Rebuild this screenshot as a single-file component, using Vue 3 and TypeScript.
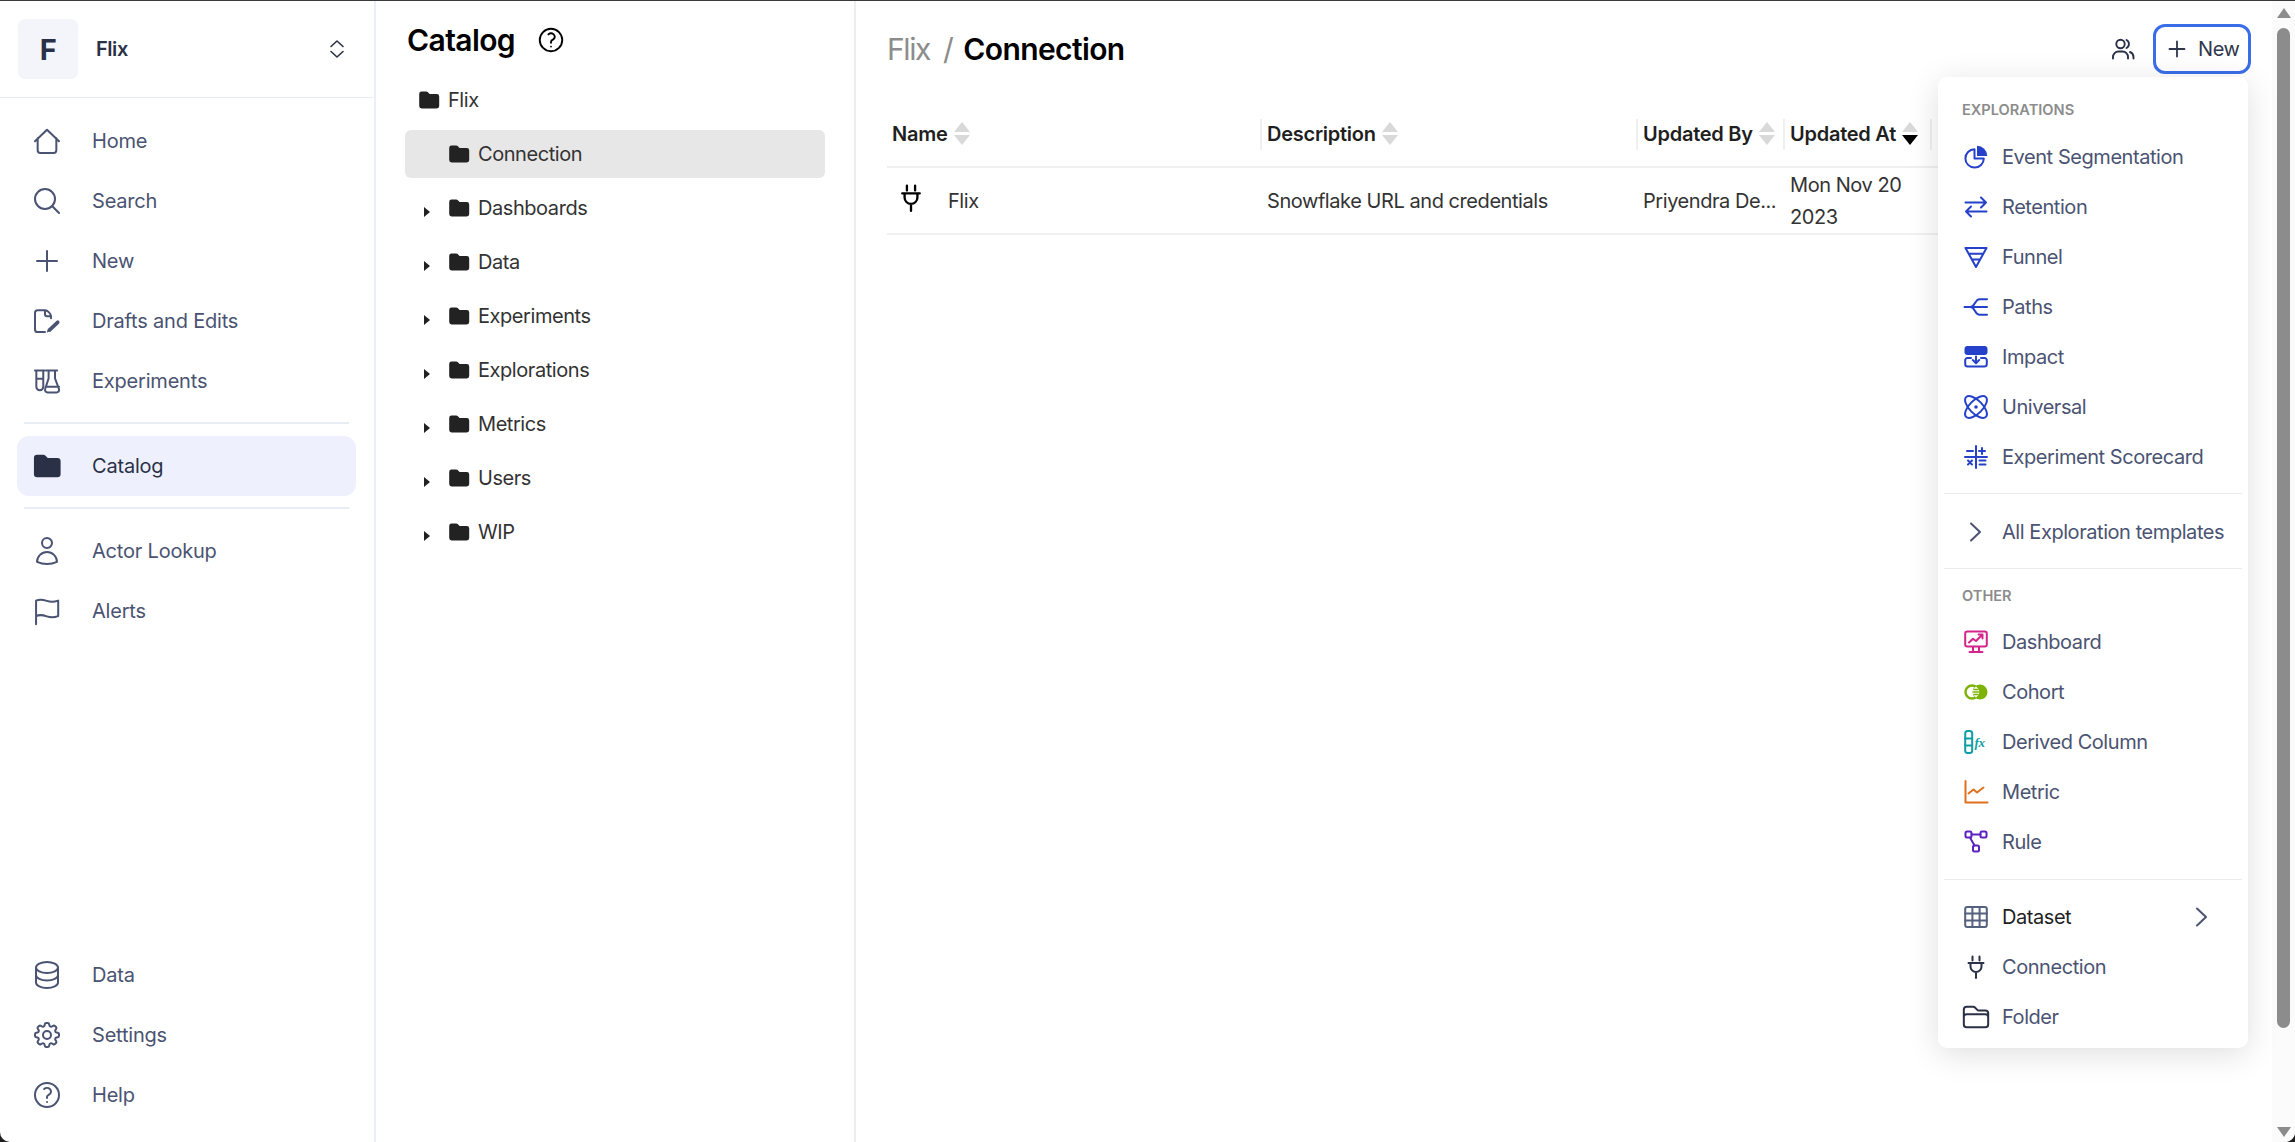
<script setup lang="ts">
interface NavItem { label: string; icon: string }
interface MenuItem { label: string; icon: string; color: string; large?: boolean; dark?: boolean; more?: boolean }

const BLUE = '#2541c9'
const SLATE = '#2a3147'

// inner svg markup, all on a 24 box
const icons: Record<string, string> = {
  home: '<path d="M3 12.2 12 3.6l9 8.6M5 10v9a2 2 0 0 0 2 2h10a2 2 0 0 0 2-2v-9"/>',
  search: '<path d="M21 21l-5.197-5.197m0 0A7.5 7.5 0 105.196 5.196a7.5 7.5 0 0010.607 10.607z"/>',
  plus: '<path d="M12 4.5v15m7.5-7.5h-15"/>',
  drafts: '<path d="M10.500 20.300H5a2 2 0 0 1-2-2V6a2 2 0 0 1 2-2h5.500c.5 0 2 .5 3 1.500s1.500 2 1.500 3v1.500M10.500 4v3a1.500 1.500 0 0 0 1.500 1.500h3"/><path d="M14 18.600l6-5.600" stroke-width="2.800"/><path d="M11.800 20.600l1-3 2 2z" fill="currentColor" stroke="none"/>',
  experiments: '<path d="M3 4.2h7.4M4 4.2v12.2a2.6 2.6 0 0 0 5.2 0V4.2M4 10.4h5.2M11.6 4.2h8M13.2 4.2V10l-2.6 8a2 2 0 0 0 1.9 2.6h6.6a2 2 0 0 0 1.9-2.6L18 10V4.2M11 16.4h10"/>',
  user: '<path d="M15.75 6a3.75 3.75 0 11-7.5 0 3.75 3.75 0 017.5 0zM4.501 20.118a7.5 7.5 0 0114.998 0A17.933 17.933 0 0112 21.75c-2.676 0-5.216-.584-7.499-1.632z"/>',
  flag: '<path d="M3.8 22V4.2c3-1.4 5.2-.8 8 .2 3 1 5.4 1 8.6-.2v11.6c-3.2 1.2-5.600 1.2-8.6.2-2.8-1-5-1.6-8-.2"/>',
  data: '<path d="M20.25 6.375c0 2.278-3.694 4.125-8.25 4.125S3.75 8.653 3.75 6.375m16.5 0c0-2.278-3.694-4.125-8.25-4.125S3.75 4.097 3.75 6.375m16.5 0v11.25c0 2.278-3.694 4.125-8.25 4.125s-8.25-1.847-8.25-4.125V6.375m16.5 5.625c0 2.278-3.694 4.125-8.25 4.125S3.75 14.278 3.75 12"/>',
  settings: '<path d="M10.343 3.94c.09-.542.56-.94 1.11-.94h1.093c.55 0 1.02.398 1.11.94l.149.894c.07.424.384.764.78.93.398.164.855.142 1.205-.108l.737-.527a1.125 1.125 0 011.45.12l.773.774c.39.389.44 1.002.12 1.45l-.527.737c-.25.35-.272.806-.107 1.204.165.397.505.71.93.78l.893.15c.543.09.94.56.94 1.109v1.094c0 .55-.397 1.02-.94 1.11l-.893.149c-.425.07-.765.383-.93.78-.165.398-.143.854.107 1.204l.527.738c.32.447.269 1.06-.12 1.45l-.774.773a1.125 1.125 0 01-1.449.12l-.738-.527c-.35-.25-.806-.272-1.203-.107-.397.165-.71.505-.781.929l-.149.894c-.09.542-.56.94-1.11.94h-1.094c-.55 0-1.019-.398-1.11-.94l-.148-.894c-.071-.424-.384-.764-.781-.93-.398-.164-.854-.142-1.204.108l-.738.527c-.447.32-1.06.269-1.45-.12l-.773-.774a1.125 1.125 0 01-.12-1.45l.527-.737c.25-.35.273-.806.108-1.204-.165-.397-.505-.71-.93-.78l-.894-.15c-.542-.09-.94-.56-.94-1.109v-1.094c0-.55.398-1.02.94-1.11l.894-.149c.424-.07.765-.383.93-.78.165-.398.143-.854-.107-1.204l-.527-.738a1.125 1.125 0 01.12-1.45l.773-.773a1.125 1.125 0 011.45-.12l.737.527c.35.25.807.272 1.204.107.397-.165.71-.505.78-.929l.15-.894z"/><path d="M15 12a3 3 0 11-6 0 3 3 0 016 0z"/>',
  help: '<path d="M9.879 7.519c1.171-1.025 3.071-1.025 4.242 0 1.172 1.025 1.172 2.687 0 3.712-.203.179-.43.326-.67.442-.745.361-1.45.999-1.45 1.827v.75M21 12a9 9 0 11-18 0 9 9 0 0118 0zm-9 5.25h.008v.008H12v-.008z"/>',
  folderSolid: '<path fill="currentColor" stroke="none" d="M2.2 6A2.4 2.4 0 0 1 4.6 3.6h4.6c.6 0 1.2.3 1.7.7l1.7 1.7h7.2a2.4 2.4 0 0 1 2.4 2.4v9.6a2.4 2.4 0 0 1-2.4 2.4H4.6a2.4 2.4 0 0 1-2.4-2.4z"/>',
  plug: '<path d="M8.5 1.5v4M15.5 1.5v4M4.5 8h15M6.5 8v3.5a5.5 5.5 0 0 0 11 0V8M12 17v6"/>',
  pie: '<path d="M10.5 4.2A9.2 9.2 0 1 0 19.8 13.5H10.5z"/><path fill="currentColor" stroke="none" d="M13 .8A10.2 10.2 0 0 1 23.2 11H13z"/>',
  retention: '<path d="M1.5 7.5H22M17 2.5l5 5-5 5M22.5 16.5H2M7 11.5l-5 5 5 5"/>',
  funnel: '<path d="M1.5 3h21L12 22zM5 8.8h14M8.4 14.4h7.2"/>',
  paths: '<path d="M.5 12H23M6.500 12c4.500 0 4.500-7.800 9-7.800H23M6.500 12c4.500 0 4.500 7.800 9 7.800H23"/>',
  impact: '<rect x=".5" y="1" width="23" height="9" rx="3" fill="currentColor" stroke="none"/><path d="M7 13H3.4a2.2 2.2 0 0 0-2.2 2.2V19a2.6 2.6 0 0 0 2.6 2.6h16.4a2.6 2.6 0 0 0 2.6-2.6v-3.8a2.2 2.2 0 0 0-2.2-2.2H17M12 11.5v6M8.8 15l3.2 3.2 3.2-3.2"/>',
  universal: '<ellipse cx="12" cy="12" rx="14" ry="6.5" transform="rotate(45 12 12)"/><ellipse cx="12" cy="12" rx="14" ry="6.5" transform="rotate(-45 12 12)"/><circle cx="12" cy="12" r="1.8" fill="currentColor" stroke="none"/>',
  scorecard: '<path d="M12 1v22M1 12h22M3 6h6M15 6h6M18 3v6M4 15.5l4 4M8 15.5l-4 4M15.500 15.500h6M15.500 19.500h6"/>',
  dashboard: '<rect x="1.200" y="1.500" width="21.600" height="15" rx="2"/><path d="M9 17v4M15 17v4M5.500 22h13M5 12.500l4-3.800 3 2.300 6-6M14.500 4.500h4v4"/>',
  cohort: '<circle cx="8" cy="12" r="6.500" stroke-width="2.400"/><circle cx="16" cy="12" r="7.500" fill="currentColor" stroke="none"/><path fill="#fff" stroke="none" d="M12 6.500c2.200 1.400 3.200 3.400 3.200 5.500s-1 4.100-3.200 5.500c-2.200-1.400-3.200-3.400-3.200-5.500s1-4.100 3.200-5.500z"/><path stroke-width="1.400" d="M10 9.500h4M9.600 12h4.800M10 14.500h4"/>',
  derived: '<rect x="1.200" y="1" width="7" height="22" rx="2.500"/><path d="M1.200 8.500h7M1.200 15.500h7"/><text x="10.500" y="16.500" font-family="Liberation Serif, serif" font-style="italic" font-weight="700" font-size="13" fill="currentColor" stroke="none">fx</text>',
  metric: '<path d="M1.500 1v21.500h22M4.500 13.500l5-4 3.500 3 6.500-5"/>',
  rule: '<rect x="1.500" y="1.500" width="6" height="6" rx="1.500"/><rect x="16.500" y="1.500" width="6" height="6" rx="1.500"/><rect x="9" y="15.500" width="6" height="6" rx="1.500"/><path d="M7.500 4.500h9M6 7.500l4.500 8"/>',
  table: '<rect x="1.200" y="2" width="21.600" height="20" rx="2"/><path d="M8.400 2v20M15.600 2v20M1.200 8.600h21.600M1.200 15.400h21.600"/>',
  folder: '<path d="M2.250 12.750V12A2.250 2.250 0 014.500 9.750h15A2.250 2.250 0 0121.750 12v.75m-8.690-6.440l-2.120-2.120a1.500 1.500 0 00-1.061-.44H4.500A2.250 2.250 0 002.250 6v12a2.250 2.250 0 002.250 2.250h15A2.250 2.250 0 0021.750 18V9a2.250 2.250 0 00-2.250-2.250h-5.379a1.500 1.500 0 01-1.060-.44z"/>',
  chevron: '<path d="M7 3.500 16 12l-9 8.500"/>',
}

const mainNav: NavItem[] = [
  { label: 'Home', icon: 'home' },
  { label: 'Search', icon: 'search' },
  { label: 'New', icon: 'plus' },
  { label: 'Drafts and Edits', icon: 'drafts' },
  { label: 'Experiments', icon: 'experiments' },
]
const lookupNav: NavItem[] = [
  { label: 'Actor Lookup', icon: 'user' },
  { label: 'Alerts', icon: 'flag' },
]
const bottomNav: NavItem[] = [
  { label: 'Data', icon: 'data' },
  { label: 'Settings', icon: 'settings' },
  { label: 'Help', icon: 'help' },
]

const folders = ['Dashboards', 'Data', 'Experiments', 'Explorations', 'Metrics', 'Users', 'WIP']

const explorations: MenuItem[] = [
  { label: 'Event Segmentation', icon: 'pie', color: BLUE },
  { label: 'Retention', icon: 'retention', color: BLUE },
  { label: 'Funnel', icon: 'funnel', color: BLUE },
  { label: 'Paths', icon: 'paths', color: BLUE },
  { label: 'Impact', icon: 'impact', color: BLUE },
  { label: 'Universal', icon: 'universal', color: BLUE },
  { label: 'Experiment Scorecard', icon: 'scorecard', color: BLUE },
]
const others: MenuItem[] = [
  { label: 'Dashboard', icon: 'dashboard', color: '#d4248c' },
  { label: 'Cohort', icon: 'cohort', color: '#7cb305' },
  { label: 'Derived Column', icon: 'derived', color: '#0f9ea6' },
  { label: 'Metric', icon: 'metric', color: '#e0701e' },
  { label: 'Rule', icon: 'rule', color: '#5a22c0' },
]
const extras: MenuItem[] = [
  { label: 'Dataset', icon: 'table', color: '#56607f', dark: true, more: true },
  { label: 'Connection', icon: 'plug', color: SLATE },
  { label: 'Folder', icon: 'folder', color: SLATE, large: true },
]
</script>

<template>
  <div class="window">
    <!-- Left nav -->
    <aside class="sidebar">
      <div class="org">
        <div class="org-badge">F</div>
        <span class="org-name">Flix</span>
        <svg class="org-switch" viewBox="0 0 24 24"><path d="M6 9.500l6-5.500 6 5.500M6 14.500l6 5.500 6-5.500"/></svg>
      </div>

      <nav class="nav nav-main">
        <a v-for="item in mainNav" :key="item.label" class="nav-item">
          <svg class="nav-icon" viewBox="0 0 24 24" v-html="icons[item.icon]"></svg>
          <span>{{ item.label }}</span>
        </a>
        <div class="nav-rule"></div>
        <a class="nav-item active">
          <svg class="nav-icon" viewBox="0 0 24 24" v-html="icons.folderSolid"></svg>
          <span>Catalog</span>
        </a>
        <div class="nav-rule"></div>
        <a v-for="item in lookupNav" :key="item.label" class="nav-item">
          <svg class="nav-icon" viewBox="0 0 24 24" v-html="icons[item.icon]"></svg>
          <span>{{ item.label }}</span>
        </a>
      </nav>

      <nav class="nav nav-bottom">
        <a v-for="item in bottomNav" :key="item.label" class="nav-item">
          <svg class="nav-icon" viewBox="0 0 24 24" v-html="icons[item.icon]"></svg>
          <span>{{ item.label }}</span>
        </a>
      </nav>
    </aside>

    <!-- Catalog tree -->
    <section class="catalog">
      <div class="catalog-head">
        <h1>Catalog</h1>
        <svg class="catalog-help" viewBox="0 0 24 24" v-html="icons.help"></svg>
      </div>
      <div class="tree">
        <div class="tree-row">
          <svg class="tree-folder" viewBox="0 0 24 24" v-html="icons.folderSolid"></svg>
          <span>Flix</span>
        </div>
        <div class="tree-row selected">
          <span class="caret-slot"></span>
          <svg class="tree-folder" viewBox="0 0 24 24" v-html="icons.folderSolid"></svg>
          <span>Connection</span>
        </div>
        <div v-for="name in folders" :key="name" class="tree-row">
          <span class="caret-slot"><i class="caret"></i></span>
          <svg class="tree-folder" viewBox="0 0 24 24" v-html="icons.folderSolid"></svg>
          <span>{{ name }}</span>
        </div>
      </div>
    </section>

    <!-- Content -->
    <main class="content">
      <header class="topbar">
        <div class="crumbs">
          <span class="crumb-root">Flix</span>
          <span class="crumb-sep">/</span>
          <span class="crumb-current">Connection</span>
        </div>
        <div class="actions">
          <svg class="people" viewBox="0 0 24 24">
            <circle cx="9.500" cy="7" r="4.200"/>
            <path d="M2 21.500V20a5.500 5.500 0 0 1 5.500-5.500h4A5.500 5.500 0 0 1 17 20v1.500M15.500 3a4.500 4.500 0 0 1 0 8M22.500 21.500V20a5.500 5.500 0 0 0-3.500-5"/>
          </svg>
          <button class="new-btn">
            <svg viewBox="0 0 24 24"><path d="M12 4.500v15m7.500-7.500h-15"/></svg>
            <span>New</span>
          </button>
        </div>
      </header>

      <div class="grid">
        <div class="th first">Name<span class="sort"><i class="up"></i><i class="down"></i></span></div>
        <div class="th">Description<span class="sort"><i class="up"></i><i class="down"></i></span></div>
        <div class="th">Updated By<span class="sort"><i class="up"></i><i class="down"></i></span></div>
        <div class="th">Updated At<span class="sort on"><i class="up"></i><i class="down"></i></span></div>
        <div class="th"></div>

        <div class="td first name-cell">
          <svg class="plug" viewBox="0 0 24 24" v-html="icons.plug"></svg>
          <span>Flix</span>
        </div>
        <div class="td">Snowflake URL and credentials</div>
        <div class="td">Priyendra De...</div>
        <div class="td date">Mon Nov 20 2023</div>
        <div class="td"></div>
      </div>

      <!-- New dropdown -->
      <div class="menu">
        <div class="menu-title top">EXPLORATIONS</div>
        <a v-for="item in explorations" :key="item.label" class="menu-item">
          <svg class="menu-icon" :style="{ color: item.color }" viewBox="0 0 24 24" v-html="icons[item.icon]"></svg>
          <span>{{ item.label }}</span>
        </a>
        <div class="menu-rule before-all"></div>
        <a class="menu-item">
          <svg class="menu-icon chevron" viewBox="0 0 24 24" v-html="icons.chevron"></svg>
          <span>All Exploration templates</span>
        </a>
        <div class="menu-rule"></div>
        <div class="menu-title">OTHER</div>
        <a v-for="item in others" :key="item.label" class="menu-item">
          <svg class="menu-icon" :style="{ color: item.color }" viewBox="0 0 24 24" v-html="icons[item.icon]"></svg>
          <span>{{ item.label }}</span>
        </a>
        <div class="menu-rule before-extras"></div>
        <a v-for="item in extras" :key="item.label" class="menu-item" :class="{ dark: item.dark }">
          <svg class="menu-icon" :class="{ large: item.large }" :style="{ color: item.color }" viewBox="0 0 24 24" v-html="icons[item.icon]"></svg>
          <span>{{ item.label }}</span>
          <svg v-if="item.more" class="menu-icon chevron more" viewBox="0 0 24 24" v-html="icons.chevron"></svg>
        </a>
      </div>
    </main>

    <div class="scrollbar">
      <i class="arrow-up"></i>
      <div class="thumb"></div>
      <i class="arrow-down"></i>
    </div>
  </div>
</template>

<style>
html, body {
  margin: 0;
  background: #1f1f1f;
  overflow: hidden;
}
</style>

<style scoped>
.window {
  display: flex;
  height: 1142px;
  box-sizing: border-box;
  border-top: 1px solid #3a3a3a;
  border-radius: 0 0 10px 10px;
  overflow: hidden;
  background: #fff;
  font-family: Inter, "Liberation Sans", sans-serif;
  font-size: 20px;
  letter-spacing: -0.44px;
  color: #333;
}

svg {
  fill: none;
  stroke: currentColor;
  stroke-linecap: round;
  stroke-linejoin: round;
}

/* Sidebar */
.sidebar {
  flex: 0 0 376px;
  box-sizing: border-box;
  display: flex;
  flex-direction: column;
  border-right: 2px solid #eaeef6;
}

.org {
  display: flex;
  align-items: center;
  height: 96px;
  padding: 0 0 0 18px;
  border-bottom: 1px solid #e8ecf4;
}

.org-badge {
  width: 60px;
  height: 60px;
  display: flex;
  align-items: center;
  justify-content: center;
  border-radius: 7px;
  background: #f3f5fa;
  color: #2a3147;
  font-size: 29px;
  font-weight: 700;
}

.org-name {
  margin-left: 18px;
  font-weight: 600;
  color: #2a3147;
}

.org-switch {
  width: 24px;
  height: 24px;
  margin-left: auto;
  margin-right: 25px;
  stroke: #2a3147;
  stroke-width: 1.6;
}

.nav {
  display: flex;
  flex-direction: column;
  padding: 0 18px 0 17px;
  letter-spacing: -0.2px;
}

.nav-main {
  padding-top: 13px;
}

.nav-bottom {
  margin-top: auto;
  padding-bottom: 17px;
}

.nav-item {
  height: 60px;
  display: flex;
  align-items: center;
  gap: 29px;
  padding-left: 14px;
  border-radius: 12px;
  color: #4a5372;
}

.nav-item.active {
  background: #eef1fd;
  color: #2a3147;
}

.nav-icon {
  width: 32px;
  height: 32px;
  flex: none;
  stroke-width: 1.5;
}

.nav-rule {
  height: 2px;
  margin: 12px 7px;
  background: #e8ecf4;
}

.nav-item + .nav-rule {
  margin-top: 11px;
}

/* Catalog */
.catalog {
  flex: 0 0 480px;
  box-sizing: border-box;
  padding: 0 29px;
  border-right: 2px solid #eeeeee;
}

.catalog-head {
  height: 75px;
  box-sizing: border-box;
  display: flex;
  align-items: center;
  gap: 21px;
  padding: 3px 0 0 2px;
}

.catalog-head h1 {
  margin: 0;
  font-size: 30px;
  letter-spacing: -0.6px;
  font-weight: 600;
  color: #000;
}

.catalog-help {
  width: 30px;
  height: 30px;
  color: #000;
  stroke-width: 1.5;
}

.tree {
  display: flex;
  flex-direction: column;
  gap: 6px;
}

.tree-row {
  height: 48px;
  display: flex;
  align-items: center;
  gap: 7px;
  padding-left: 12px;
  border-radius: 6px;
}

.tree-row.selected {
  background: #e7e7e7;
}

.caret-slot {
  width: 23px;
  flex: none;
}

.caret {
  display: block;
  width: 0;
  height: 0;
  margin: 8px 0 0 7px;
  border-style: solid;
  border-width: 5px 0 5px 6px;
  border-color: transparent transparent transparent #222;
}

.tree-folder {
  width: 24px;
  height: 24px;
  flex: none;
  color: #222;
}

/* Content */
.content {
  position: relative;
  flex: 1;
  min-width: 0;
  padding-left: 31px;
}

.topbar {
  height: 100px;
  display: flex;
  align-items: center;
  justify-content: space-between;
  padding-right: 21px;
  padding-bottom: 4px;
  box-sizing: border-box;
}

.crumbs {
  display: flex;
  align-items: center;
  font-size: 30px;
  letter-spacing: -0.6px;
}

.crumb-root {
  margin-right: 13px;
  letter-spacing: -1.4px;
  color: #8c8c8c;
}

.crumb-sep {
  margin-right: 10px;
  color: #8c8c8c;
}

.crumb-current {
  font-weight: 600;
  color: #000;
}

.actions {
  display: flex;
  align-items: center;
  gap: 18px;
}

.people {
  width: 24px;
  height: 24px;
  color: #2a3147;
  stroke-width: 1.9;
}

.new-btn {
  display: flex;
  align-items: center;
  gap: 9px;
  width: 98px;
  height: 50px;
  padding: 0 0 0 9px;
  box-sizing: border-box;
  border: 3px solid #3a6ee8;
  border-radius: 12px;
  background: #fff;
  font: inherit;
  letter-spacing: -0.44px;
  color: #2f364c;
}

.new-btn svg {
  width: 24px;
  height: 24px;
  stroke-width: 1.8;
}

.grid {
  display: grid;
  grid-template-columns: 373px 376px 147px 147px 1fr;
  margin-right: 32px;
}

.th {
  position: relative;
  height: 67px;
  display: flex;
  align-items: center;
  padding-left: 7px;
  box-sizing: border-box;
  border-bottom: 2px solid #f0f0f0;
  letter-spacing: -0.25px;
  font-weight: 600;
  color: #1f1f1f;
  white-space: nowrap;
  overflow: hidden;
}

.th:not(.first)::before {
  content: "";
  position: absolute;
  left: 0;
  top: 18px;
  bottom: 16px;
  width: 2px;
  background: #f0f0f0;
}

.th.first,
.td.first {
  padding-left: 5px;
}

.sort {
  display: flex;
  flex-direction: column;
  gap: 3px;
  margin-left: 6px;
}

.sort i {
  display: block;
  width: 0;
  height: 0;
  border-left: 8px solid transparent;
  border-right: 8px solid transparent;
}

.sort .up {
  border-bottom: 10px solid #d9d9d9;
}

.sort .down {
  border-top: 10px solid #d9d9d9;
}

.sort.on .down {
  border-top-color: #000;
}

.td {
  height: 67px;
  display: flex;
  align-items: center;
  padding-left: 7px;
  box-sizing: border-box;
  border-bottom: 2px solid #f0f0f0;
  line-height: 32px;
  color: #333;
  min-width: 0;
}

.name-cell {
  gap: 23px;
}

.plug {
  width: 28px;
  height: 28px;
  margin: -5px 0 0 5px;
  color: #000;
  stroke-width: 2;
}

.date {
  padding-right: 20px;
}

/* New dropdown */
.menu {
  position: absolute;
  top: 76px;
  left: 1082px;
  z-index: 2;
  width: 310px;
  box-sizing: border-box;
  padding-bottom: 6px;
  border-radius: 9px;
  background: #fff;
  box-shadow: 0 6px 32px rgba(0, 0, 0, 0.13);
}

.menu-title {
  height: 20px;
  padding: 6px 0 11px 24px;
  font-size: 14.6px;
  letter-spacing: 0;
  line-height: 20px;
  font-weight: 600;
  color: #8c8c8c;
}

.menu-title.top {
  padding-top: 23px;
  padding-bottom: 12px;
}

.menu-item {
  height: 50px;
  display: flex;
  align-items: center;
  gap: 14px;
  padding-left: 26px;
  color: #4a5372;
}

.menu-item.dark {
  color: #1f1f1f;
}

.menu-icon {
  width: 24px;
  height: 24px;
  flex: none;
  stroke-width: 2;
  overflow: visible;
}

.menu-icon.large {
  width: 30px;
  height: 30px;
  margin: 0 -3px;
  stroke-width: 1.6;
}

.chevron {
  color: #4a5372;
}

.more {
  margin-left: auto;
  margin-right: 34px;
}

.menu-rule {
  height: 1px;
  margin: 11px 6px;
  background: #ececec;
}

.menu-rule.before-all {
  margin-bottom: 13px;
}

.menu-rule.before-extras {
  margin: 12px 6px;
}

/* Scrollbar */
.scrollbar {
  flex: 0 0 23px;
  display: flex;
  flex-direction: column;
  align-items: center;
  background: #fbfbfb;
}

.arrow-up,
.arrow-down {
  width: 0;
  height: 0;
  border-left: 7px solid transparent;
  border-right: 7px solid transparent;
}

.arrow-up {
  margin-top: 7px;
  border-bottom: 10px solid #8c8c8c;
}

.arrow-down {
  margin-top: 99px;
  border-top: 10px solid #8c8c8c;
}

.thumb {
  width: 13px;
  height: 1000px;
  margin-top: 10px;
  border-radius: 7px;
  background: #8c8c8c;
}
</style>
